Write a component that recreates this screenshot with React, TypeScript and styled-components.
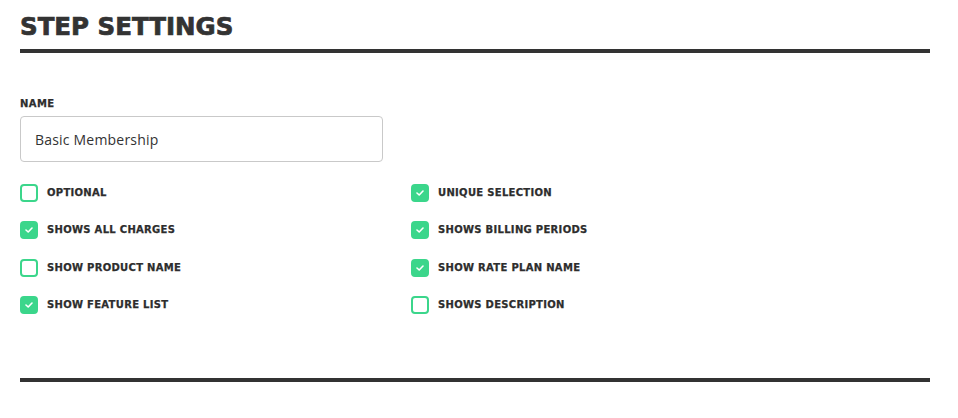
import React from 'react';
import styled, { createGlobalStyle } from 'styled-components';

const GlobalStyle = createGlobalStyle`
  body {
    margin: 0;
    background: #fff;
    font-family: "Open Sans", "Liberation Sans", sans-serif;
    color: #333;
  }
`

const heavy = `"DejaVu Sans", "Liberation Sans", sans-serif`;

const Page = styled.div`
  padding: 12px 28px 0 20px;
  width: 910px;
`

const Title = styled.h1`
  margin: 0;
  font-family: ${heavy};
  font-size: 24.5px;
  line-height: 30px;
  font-weight: 700;
  color: #333;
  -webkit-text-stroke: 0.7px #333;
`

const Rule = styled.div<{ $top: number }>`
  height: 4px;
  background: #333;
  margin-top: ${p => p.$top}px;
`

const Field = styled.div`
  margin-top: 45px;
  width: 363px;
`

const FieldLabel = styled.label`
  display: block;
  font-family: ${heavy};
  font-size: 10px;
  line-height: 12px;
  font-weight: 700;
  letter-spacing: 0.4px;
  color: #2d2d2d;
  -webkit-text-stroke: 0.25px #2d2d2d;
`

const TextInput = styled.input`
  box-sizing: border-box;
  display: block;
  margin-top: 6px;
  width: 100%;
  height: 46px;
  padding: 0 14px;
  border: 1px solid #c9c9c9;
  border-radius: 4px;
  font-family: "Open Sans", "Liberation Sans", sans-serif;
  font-size: 14px;
  letter-spacing: 0.2px;
  color: #333;
  outline: none;
`

const Options = styled.div`
  display: grid;
  grid-template-columns: 391px 391px;
  grid-auto-flow: column;
  grid-template-rows: repeat(4, 18px);
  row-gap: 19.5px;
  margin-top: 21.5px;
`

const Option = styled.label`
  display: flex;
  align-items: center;
  gap: 9px;
  cursor: pointer;
`

const Box = styled.span<{ $checked: boolean }>`
  box-sizing: border-box;
  width: 18px;
  height: 18px;
  border-radius: 4px;
  border: 2px solid #3bd68b;
  background: ${p => (p.$checked ? '#3bd68b' : '#fff')};
  display: flex;
  align-items: center;
  justify-content: center;
`

const OptionText = styled.span`
  font-family: ${heavy};
  font-size: 10px;
  line-height: 12px;
  font-weight: 700;
  letter-spacing: 0.3px;
  color: #2d2d2d;
  -webkit-text-stroke: 0.25px #2d2d2d;
`

const options = [
  { label: 'OPTIONAL', checked: false },
  { label: 'SHOWS ALL CHARGES', checked: true },
  { label: 'SHOW PRODUCT NAME', checked: false },
  { label: 'SHOW FEATURE LIST', checked: true },
  { label: 'UNIQUE SELECTION', checked: true },
  { label: 'SHOWS BILLING PERIODS', checked: true },
  { label: 'SHOW RATE PLAN NAME', checked: true },
  { label: 'SHOWS DESCRIPTION', checked: false },
];

const Check = () => (
  <svg width="8" height="6" viewBox="0 0 8 6" fill="none">
    <polyline points="1,3 3.2,5 7,1" stroke="#fff" strokeWidth="1.6" strokeLinecap="round" strokeLinejoin="round" />
  </svg>
);

export default function App() {
  return (
    <>
      <GlobalStyle />
      <Page>
        <Title>STEP SETTINGS</Title>
        <Rule $top={7} />
        <Field>
          <FieldLabel>NAME</FieldLabel>
          <TextInput defaultValue="Basic Membership" />
        </Field>
        <Options>
          {options.map(o => (
            <Option key={o.label}>
              <Box $checked={o.checked}>{o.checked && <Check />}</Box>
              <OptionText>{o.label}</OptionText>
            </Option>
          ))}
        </Options>
        <Rule $top={63.5} />
      </Page>
    </>
  );
}
